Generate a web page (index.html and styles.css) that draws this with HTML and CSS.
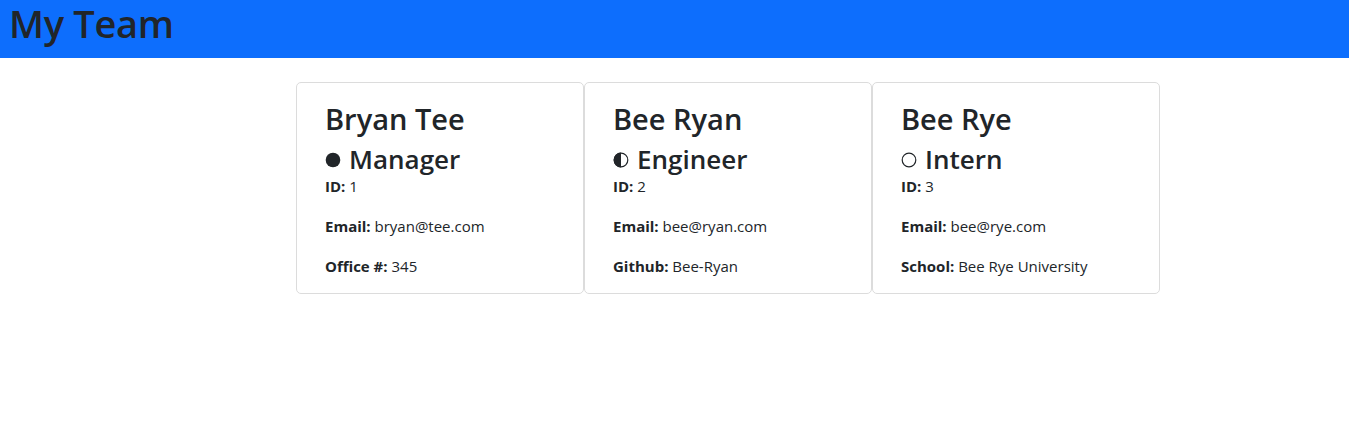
FILE: index.html
```html
<!DOCTYPE html>
<html lang="en">
<head>
<meta charset="utf-8">
<title>My Team</title>
<link rel="stylesheet" href="styles.css">
</head>
<body>
<header class="topbar">
  <h1 class="title">My Team</h1>
</header>
<main class="team">
  <section class="card">
    <h2 class="name">Bryan Tee</h2>
    <h3 class="role"><svg class="ico" viewBox="0 0 16 16"><circle cx="8" cy="8" r="7.3" fill="#212529"/></svg>Manager</h3>
    <p class="info"><b>ID:</b> 1</p>
    <p class="info"><b>Email:</b> bryan@tee.com</p>
    <p class="info last"><b>Office #:</b> 345</p>
  </section>
  <section class="card">
    <h2 class="name">Bee Ryan</h2>
    <h3 class="role"><svg class="ico" viewBox="0 0 16 16"><circle cx="8" cy="8" r="6.8" fill="none" stroke="#212529" stroke-width="1.2"/><path d="M8 0.6 A7.4 7.4 0 0 0 8 15.4 Z" fill="#212529"/></svg>Engineer</h3>
    <p class="info"><b>ID:</b> 2</p>
    <p class="info"><b>Email:</b> bee@ryan.com</p>
    <p class="info last"><b>Github:</b> Bee-Ryan</p>
  </section>
  <section class="card">
    <h2 class="name">Bee Rye</h2>
    <h3 class="role"><svg class="ico" viewBox="0 0 16 16"><circle cx="8" cy="8" r="6.8" fill="none" stroke="#212529" stroke-width="1.2"/></svg>Intern</h3>
    <p class="info"><b>ID:</b> 3</p>
    <p class="info"><b>Email:</b> bee@rye.com</p>
    <p class="info last"><b>School:</b> Bee Rye University</p>
  </section>
</main>
</body>
</html>
```
FILE: styles.css
```css
* { box-sizing: border-box; }
body {
  margin: 0;
  font-family: "Open Sans", "Noto Sans", sans-serif;
  color: #212529;
  background: #fff;
}
.topbar {
  background: #0d6efd;
  height: 58px;
  padding: 1px 0 0 9px;
}
.title {
  margin: 0;
  font-size: 38px;
  font-weight: 600;
  line-height: 44px;
  letter-spacing: -0.3px;
}
.team {
  display: flex;
  margin: 24px 0 0 296px;
}
.card {
  width: 288px;
  border: 1px solid #dcdcdc;
  border-radius: 5px;
  padding: 17px 20px 15px 28px;
}
.name {
  margin: 0;
  font-size: 29px;
  font-weight: 600;
  line-height: 38px;
}
.role {
  margin: 6px 0 0;
  font-size: 26px;
  font-weight: 600;
  line-height: 30px;
  display: flex;
  align-items: center;
}
.ico {
  width: 16px;
  height: 16px;
  margin-right: 8px;
  margin-top: 2px;
}
.info {
  margin: 0 0 16px;
  font-size: 15px;
  line-height: 24px;
}
.info b { font-weight: 700; }
.info.last { margin-bottom: 0; }
```
